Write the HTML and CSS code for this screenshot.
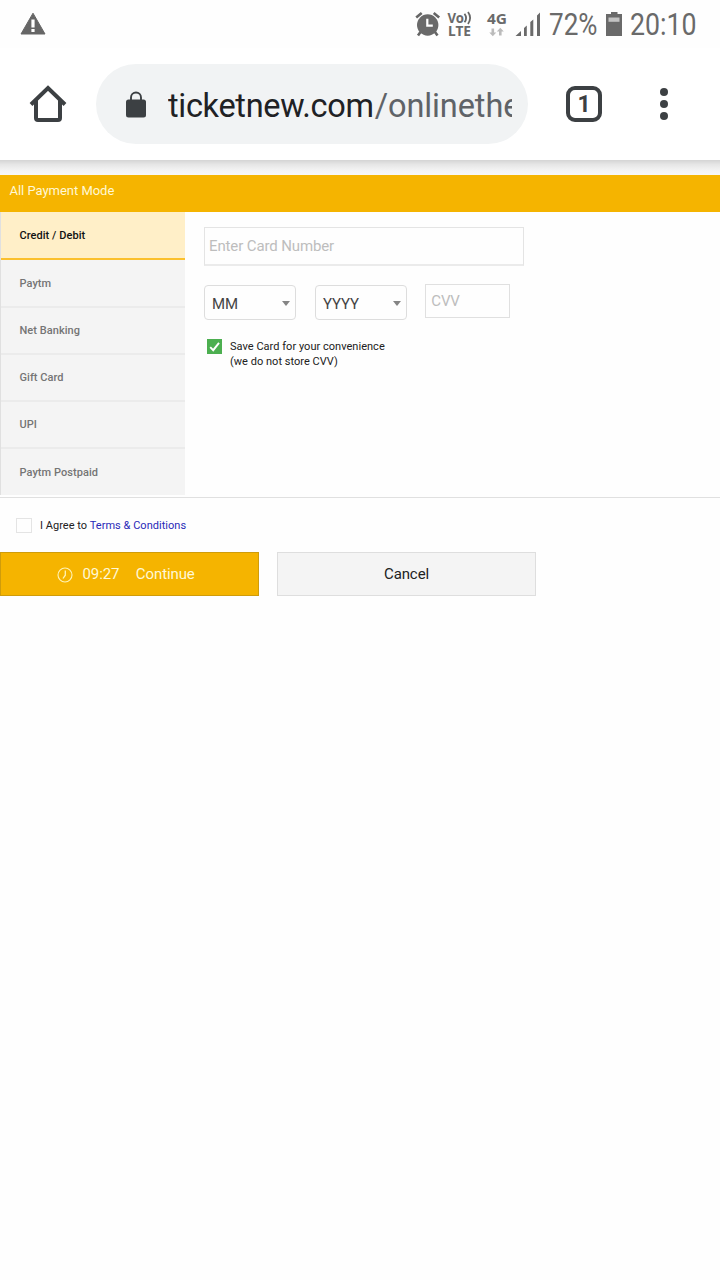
FILE: index.html
```html
<!DOCTYPE html>
<html lang="en">
<head>
<meta charset="utf-8">
<title>Payment</title>
<link rel="stylesheet" href="styles.css">
</head>
<body>
<header class="status">
  <svg class="warn" width="26" height="24" viewBox="0 0 26 24"><path d="M13 1.2 25 22H1z" fill="#666" stroke="#666" stroke-width="1" stroke-linejoin="round"/><path d="M11.4 7.5h3.2v8h-3.2zM11.4 17h3.2v3h-3.2z" fill="#fff"/></svg>
  <svg class="tray" width="300" height="48" viewBox="410 0 300 48">
    <g fill="#6a6a6a">
      <circle cx="427.7" cy="25" r="10.700"/>
      <path d="M416.200 17.500l5.500-4.500M439.200 17.500l-5.500-4.500M420.500 32l-2.500 3.500M435 32l2.500 3.500" stroke="#666" stroke-width="2.600"/>
      <path d="M427.300 18.800v6.800h5.500" fill="none" stroke="#fff" stroke-width="2.200"/>
      <text class="noto" x="447.500" y="22.800" font-size="13.500" textLength="16.500" lengthAdjust="spacingAndGlyphs">Vo</text>
      <path d="M464.500 13.700q3.200 4.300 0 8.600M468 12q4.200 5.700 0 12" fill="none" stroke="#666" stroke-width="1.800"/>
      <text class="noto" x="448" y="35.700" font-size="14" textLength="23" lengthAdjust="spacingAndGlyphs">LTE</text>
      <text class="noto" x="487" y="24" font-size="14.500" textLength="20" lengthAdjust="spacingAndGlyphs">4G</text>
      <path d="M491.500 28.500h2.600v4h2.200l-3.500 3.800-3.500-3.800h2.200zM499 35.500h2.600v-4h2.200l-3.500-3.800-3.500 3.800h2.200z" fill="#bbb"/>
      <path d="M515.500 36l5.500-5v5zM524 28l2.800-2.500V36H524zM530.300 22l3-2.500V36h-3zM537 15.500l3-3V36h-3z"/>
      <text class="cond" x="549" y="35.300" font-size="30.500" textLength="48.500" lengthAdjust="spacingAndGlyphs">72%</text>
      <path d="M611 12h6.500v2h4.500v22h-16V14h5z"/>
      <path d="M608.500 17.500h11v4.300h-11z" fill="#c3c3c3"/>
      <text class="cond" x="630" y="35.300" font-size="30.500" textLength="66.500" lengthAdjust="spacingAndGlyphs">20:10</text>
    </g>
  </svg>
</header>
<nav class="toolbar">
  <svg class="home" width="38" height="38" viewBox="0 0 38 38"><path d="M2 19.500 19 3l17 16.500M7 14.500V33q0 2 2 2h20q2 0 2-2V14.500" fill="none" stroke="#3c4043" stroke-width="4"/></svg>
  <div class="omnibox">
    <svg width="20" height="27" viewBox="0 0 20 27"><rect y="8.500" width="20" height="18" rx="2.500" fill="#3c4043"/><path d="M5 9V6.500a5 5 0 0 1 10 0V9" fill="none" stroke="#3c4043" stroke-width="1.900"/></svg>
    <span class="url">ticketnew.com<span class="path">/onlinethe</span></span>
  </div>
  <div class="tabs"><span>1</span></div>
  <div class="menu"><i></i><i></i><i></i></div>
</nav>
<div class="shade"></div>
<main>
  <h1 class="title">All Payment Mode</h1>
  <section class="modes">
    <ul class="side">
      <li class="active">Credit / Debit</li>
      <li class="first">Paytm</li>
      <li>Net Banking</li>
      <li>Gift Card</li>
      <li>UPI</li>
      <li>Paytm Postpaid</li>
    </ul>
    <div class="form">
      <div class="card">Enter Card Number</div>
      <div class="row">
        <div class="select">MM<i class="arrow"></i></div>
        <div class="select">YYYY<i class="arrow"></i></div>
        <div class="cvv">CVV</div>
      </div>
      <div class="save">
        <svg width="15" height="15" viewBox="0 0 15 15"><rect width="15" height="15" fill="#4caf50"/><path d="M3.200 8.200 6.200 11.200 12 3.800" fill="none" stroke="#fff" stroke-width="1.900"/></svg>
        <p>Save Card for your convenience<br>(we do not store CVV)</p>
      </div>
    </div>
  </section>
  <div class="agree"><i class="box"></i><span>I Agree to <a>Terms &amp; Conditions</a></span></div>
  <div class="actions">
    <div class="btn go">
      <svg width="16" height="16" viewBox="0 0 16 16" fill="none" stroke="#fff3b8"><circle cx="8" cy="8" r="7" stroke-width="1.100"/><path d="M8.300 3.500v4.700L6 11.500" stroke-width="1.300"/></svg>
      <span class="time">09:27</span><span>Continue</span>
    </div>
    <div class="btn cancel">Cancel</div>
  </div>
</main>
</body>
</html>
```

FILE: styles.css
```css
* { box-sizing: border-box; }
body { margin: 0; background: #fefefe; font-family: Roboto, "Liberation Sans", sans-serif; color: #212121; }
.status { height: 48px; display: flex; justify-content: space-between; padding: 0 10px 0 20px; }
.warn { margin-top: 12px; }
.noto { font-family: "Noto Sans", sans-serif; font-weight: 700; }
.cond { font-family: Roboto, sans-serif; }
.toolbar { height: 112px; display: flex; align-items: center; padding: 0 51px 0 29px; background: #fff; }
.omnibox { margin-left: 29px; width: 432px; height: 80px; border-radius: 40px; background: #f1f3f4; padding: 0 16px 0 30px; display: flex; align-items: center; gap: 22px; }
.omnibox svg { flex: none; }
.url { flex: 1; min-width: 0; overflow: hidden; white-space: nowrap; font-size: 32.5px; line-height: 44px; color: #202124; padding-top: 3px; letter-spacing: -0.32px; }
.path { color: #5f6368; letter-spacing: -0.1px; padding-left: 1px; }
.tabs { margin-left: 38px; width: 36px; height: 36px; border: 4px solid #3c4043; border-radius: 9px; color: #3c4043; font: 700 23px/30px Roboto, sans-serif; text-align: center; }
.menu { margin-left: auto; width: 10px; display: flex; flex-direction: column; align-items: center; gap: 4px; }
.menu i { width: 8px; height: 8px; border-radius: 50%; background: #3c4043; }
.shade { height: 15px; background: linear-gradient(#d4d4d4, #e6e6e6 30%, #f2f2f2 65%, #f7f7f7); }
.title { margin: 0; height: 37px; padding-left: 9.500px; background: #f5b400; color: #fff8d6; font-size: 13px; line-height: 32px; font-weight: 400; letter-spacing: -0.03px; }
.modes { display: flex; height: 286px; border-bottom: 1px solid #e0e0e0; }
.side { list-style: none; margin: 0; padding: 0; width: 185px; height: 283px; border-left: 1px solid #e0e0e0; background: #f4f4f4; }
.side li { height: 47px; padding-left: 18.500px; border-bottom: 2px solid #ebebeb; color: #757575; font-size: 11px; line-height: 46px; font-weight: 500; letter-spacing: 0.05px; }
.side li:last-child { height: 46px; border-bottom-width: 0; line-height: 48px; }
.side .active { height: 48px; line-height: 48px; background: #ffefc8; border-color: #fbc02d; color: #111; }
.side .first { height: 48px; line-height: 48px; }
.form { padding: 15px 0 0 19px; }
.card { width: 320px; height: 39px; border: 1px solid #e4e4e4; border-bottom: 2px solid #ebebeb; padding-left: 4px; font-size: 15px; line-height: 37px; color: #bdbdbd; letter-spacing: -0.12px; }
.row { display: flex; margin-top: 18px; }
.select { margin: 1px 19px 0 0; width: 92px; height: 35px; border: 1px solid #ddd; border-radius: 4px; padding: 2px 5px 0 7px; display: flex; align-items: center; justify-content: space-between; font-size: 15px; line-height: 38px; color: #444; letter-spacing: -0.1px; }
.arrow { border: 4px solid transparent; border-top: 5px solid #858585; border-bottom: 0; }
.cvv { width: 85px; height: 34px; margin-left: -0.700px; border: 1px solid #e0e0e0; padding-left: 5px; font-size: 15px; line-height: 32px; color: #bdbdbd; letter-spacing: -0.15px; }
.save { display: flex; gap: 8px; margin: 19px 0 0 3px; }
.save p { margin: 0; font-size: 11px; line-height: 15px; letter-spacing: 0.03px; }
.agree { height: 54px; padding-left: 16px; display: flex; align-items: center; gap: 8px; font-size: 11px; letter-spacing: 0.03px; }
.box { width: 16px; height: 15px; border: 1px solid #e4e4e4; }
.agree a { color: #2929b8; }
.actions { display: flex; gap: 18px; }
.btn { width: 259px; height: 44px; border: 1px solid #dedede; background: #f4f4f4; display: flex; align-items: center; justify-content: center; font-size: 15px; letter-spacing: -0.1px; }
.go { background: #f5b400; border-color: #cf9c0b; color: #fff8d6; justify-content: flex-start; padding-left: 56px; }
.go svg { margin-top: 2px; }
.time { margin: 0 16.500px 0 9.500px; }
```
